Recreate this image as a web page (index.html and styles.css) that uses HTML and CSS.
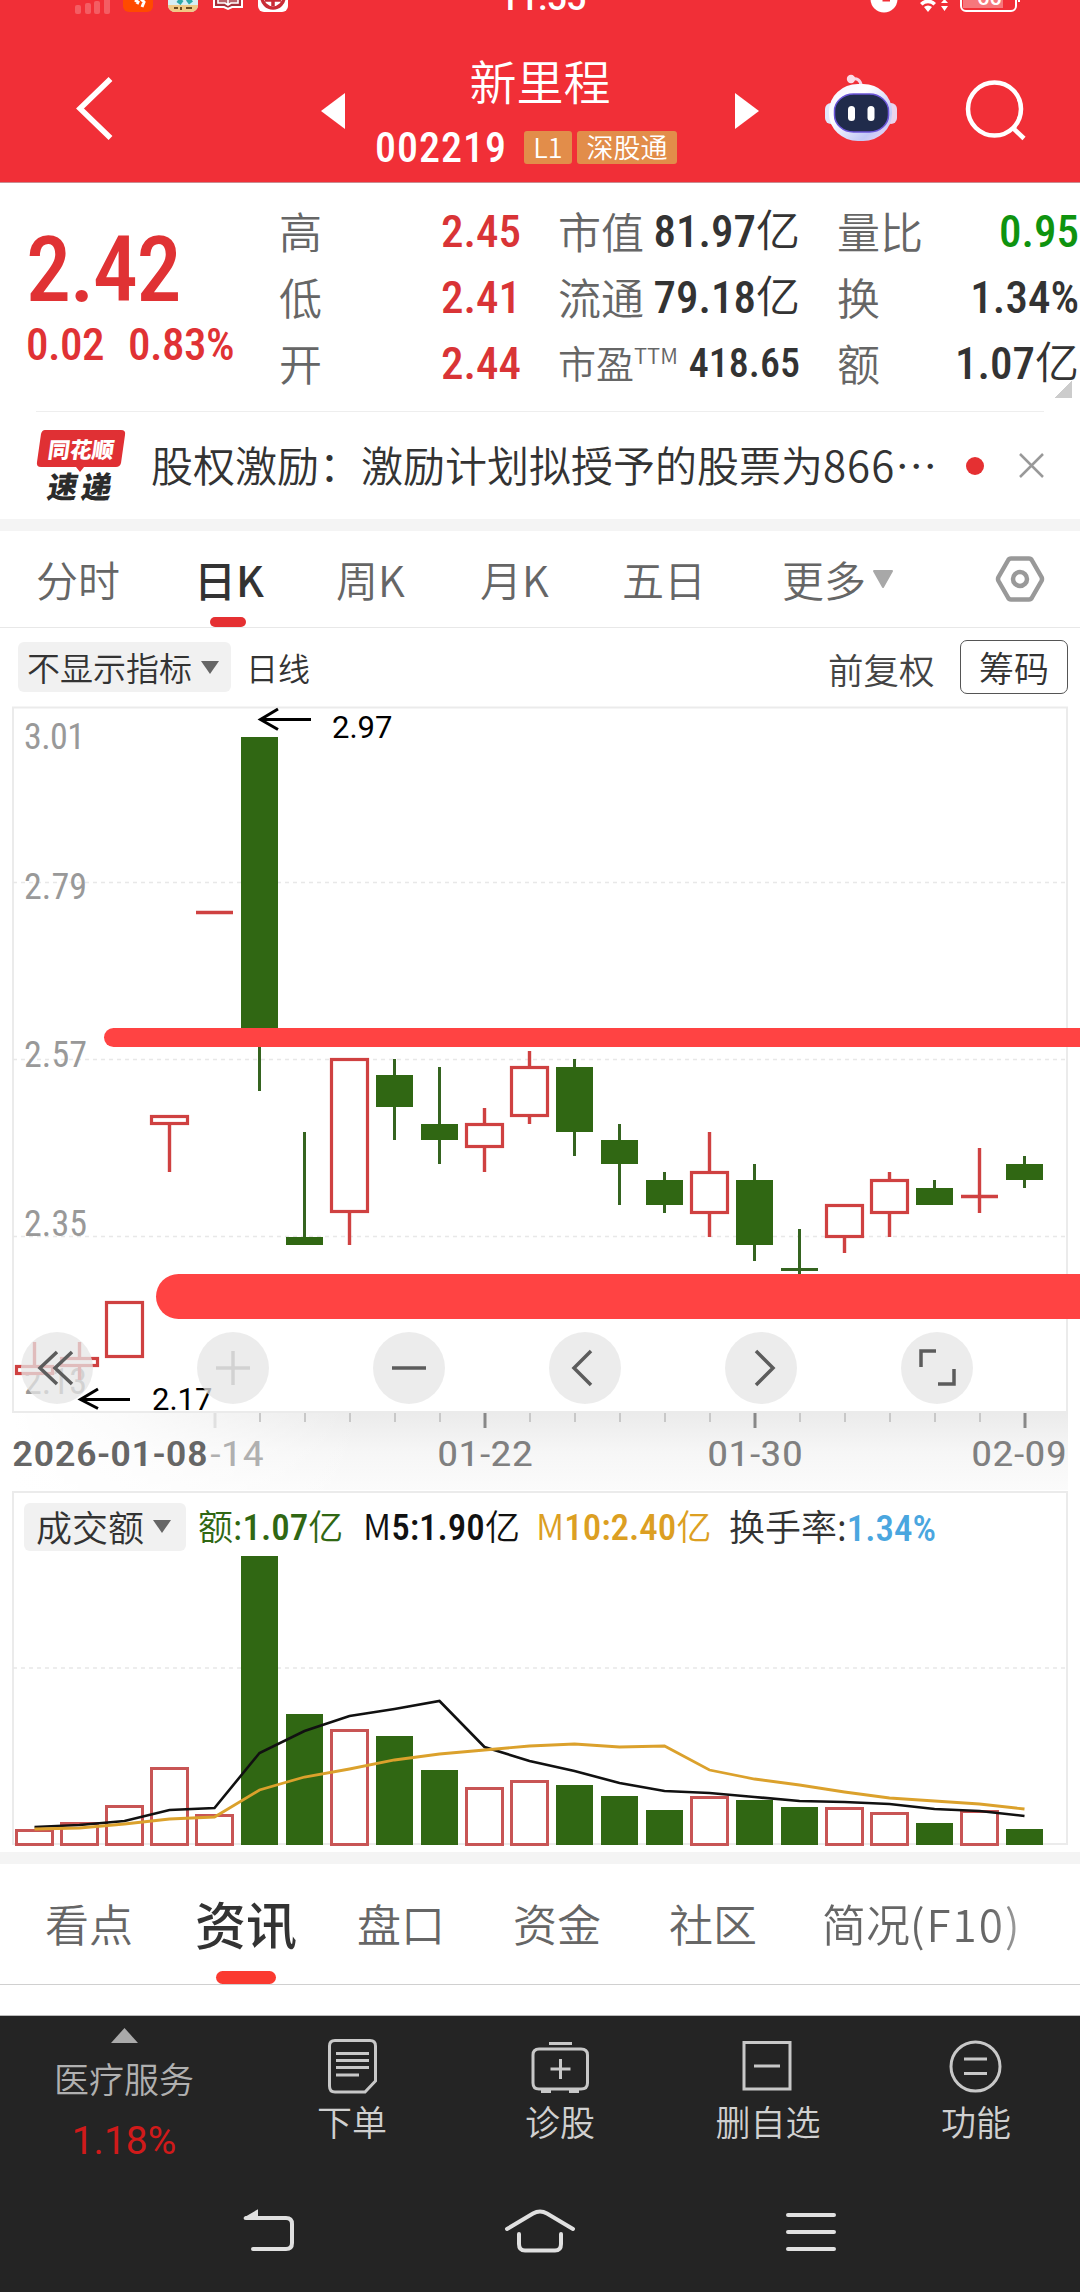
FILE: index.html
```html
<!DOCTYPE html>
<html lang="zh-CN">
<head>
	<meta charset="utf-8">
	<title>新里程 002219</title>
	<link rel="stylesheet" href="styles.css">
</head>
<body onload="drawCharts()">
	<div class="header">
		<div class="status">
			<svg class="status-left" width="230" height="14" viewBox="70 0 230 14">
				<g fill="#fff" opacity=".22">
					<rect x="75" y="5" width="6" height="9" rx="2"/>
					<rect x="85" y="3" width="6" height="11" rx="2"/>
					<rect x="94" y="1" width="6" height="13" rx="2"/>
					<rect x="104" y="-3" width="6" height="17" rx="2"/>
				</g>
				<rect x="123" y="-18" width="30" height="30" rx="6" fill="#ff4a00"/>
				<path d="M135 0l3 2-1 2M141 -1l3 3-2 5" fill="none" stroke="#fff" stroke-width="3"/>
				<rect x="168" y="-18" width="30" height="30" rx="7" fill="#d8eef4"/>
				<path d="M168 5h30a7 7 0 0 1-7 7h-16a7 7 0 0 1-7-7z" fill="#f0c985"/>
				<path d="M178 0l4 3M188 -1l3 4" stroke="#2fa8a8" stroke-width="5"/>
				<path d="M174 8h4M181 7v3M186 8h6" stroke="#6b4a20" stroke-width="2"/>
				<path d="M214 -4v11h10l4 2 4-2h10v-11" fill="#a3303a" stroke="#fff" stroke-width="2"/>
				<path d="M218 -4v7h7l3 2 3-2h7v-7M228 -4v9" fill="#fff" fill-opacity=".25" stroke="#fff" stroke-width="1.6"/>
				<rect x="258" y="-18" width="30" height="30" rx="6" fill="#fff"/>
				<circle cx="273" cy="-3" r="11" fill="none" stroke="#c92c36" stroke-width="3.500"/>
				<path d="M265 0h16M273 -3v9" stroke="#c92c36" stroke-width="3.500"/>
			</svg>
			<span class="clock">11:55</span>
			<svg class="status-right" width="160" height="14" viewBox="865 0 160 14">
				<circle cx="884" cy="-1" r="13.500" fill="#fff"/>
				<path d="M884 -6v6h6" fill="none" stroke="#f12f37" stroke-width="3"/>
				<path d="M924 7a6 6 0 0 1 8 0l-4 5zM920 3a11 11 0 0 1 16 0l-2.500 2.500a8 8 0 0 0-11 0z" fill="#fff"/>
				<path d="M941 3l3.500-4 3.500 4zM941 6l3.500 5 3.500-5z" fill="#fff"/>
				<rect x="961" y="-12" width="55" height="23" rx="5" fill="none" stroke="#fff" stroke-width="2"/>
				<rect x="963" y="-10" width="40" height="18" fill="#fff" opacity=".35"/>
				<text x="977" y="5" class="battery">60</text>
				<path d="M1019 -4v6" stroke="#fff" stroke-width="2"/>
			</svg>
		</div>
		<div class="title-bar">
			<svg class="back" width="40" height="68" viewBox="75 74 40 68"><path d="M110.500 79L80 108.500L110.500 138" fill="none" stroke="#fff" stroke-width="5.500"/></svg>
			<svg class="prev" width="24" height="36" viewBox="0 0 24 36"><path d="M0 18L24 0V36z" fill="#fff"/></svg>
			<div class="stock">
				<div class="stock-name">新里程</div>
				<div class="stock-code"><span class="num">002219</span><span class="badge l1">L1</span><span class="badge">深股通</span></div>
			</div>
			<svg class="next" width="24" height="36" viewBox="0 0 24 36"><path d="M24 18L0 0V36z" fill="#fff"/></svg>
			<svg class="robot" width="74" height="70" viewBox="824 73 74 70">
				<defs>
					<linearGradient id="shell" x1="0" y1="0" x2="1" y2="1"><stop offset="0" stop-color="#f4f2ff"/><stop offset=".35" stop-color="#ffffff"/><stop offset=".75" stop-color="#c3c8f7"/><stop offset="1" stop-color="#f8dcf0"/></linearGradient>
				</defs>
				<path d="M851 79.500q9-3 10.500 7" fill="none" stroke="#f7d5e6" stroke-width="3"/>
				<circle cx="851" cy="79" r="4.200" fill="#fbdbe6"/>
				<rect x="825" y="103" width="12" height="21" rx="6" fill="#e3e7fb"/>
				<rect x="885" y="103" width="12" height="21" rx="6" fill="#ead3ec"/>
				<rect x="829" y="84" width="63" height="57" rx="29" ry="27" fill="url(#shell)"/>
				<rect x="834.500" y="94" width="54" height="38" rx="19" ry="17" fill="#202b4b" stroke="#6b55d8" stroke-width="1.500"/>
				<rect x="848" y="106" width="7" height="15" rx="3.500" fill="#fff"/>
				<rect x="867.500" y="106" width="7" height="15" rx="3.500" fill="#fff"/>
			</svg>
			<svg class="search" width="66" height="66" viewBox="962 76 66 66"><g fill="none" stroke="#fff" stroke-width="4.500"><circle cx="994.500" cy="109" r="26.500"/><path d="M1013 128L1024 138.500"/></g></svg>
		</div>
	</div>

	<div class="quote">
		<div class="price">
			<div class="last num">2.42</div>
			<div class="change num"><span>0.02</span><span>0.83%</span></div>
		</div>
		<div class="col">
			<div class="cell"><span>高</span><b class="num up">2.45</b></div>
			<div class="cell"><span>低</span><b class="num up">2.41</b></div>
			<div class="cell"><span>开</span><b class="num up">2.44</b></div>
		</div>
		<div class="col">
			<div class="cell"><span>市值</span><b class="num">81.97<i>亿</i></b></div>
			<div class="cell"><span>流通</span><b class="num">79.18<i>亿</i></b></div>
			<div class="cell pe"><span>市盈<sup>TTM</sup></span><b class="num">418.65</b></div>
		</div>
		<div class="col">
			<div class="cell"><span>量比</span><b class="num down">0.95</b></div>
			<div class="cell"><span>换</span><b class="num">1.34%</b></div>
			<div class="cell"><span>额</span><b class="num">1.07<i>亿</i></b></div>
		</div>
		<div class="corner"></div>
	</div>

	<div class="news">
		<svg width="90" height="76" viewBox="36 427 90 76">
			<path d="M45 429H121Q126 429 125 434L121 462Q120 466 116 466H84L80 471L76 466H41Q36 466 37 461L41 433Q42 429 45 429z" fill="#e03034"/>
			<text class="logo-top" transform="translate(47 457) skewX(-8)">同花顺</text>
			<text class="logo-bottom" transform="translate(46 497) skewX(-10)" textLength="64">速递</text>
		</svg>
		<div class="news-text">股权激励：激励计划拟授予的股票为<span>866</span>⋯</div>
		<div class="news-dot"></div>
		<svg width="25" height="25" viewBox="0 0 25 25"><path d="M1 1L24 24M24 1L1 24" stroke="#999" stroke-width="2.500"/></svg>
	</div>
	<div class="band"></div>

	<div class="tabs">
		<div>分时</div>
		<div class="active">日K</div>
		<div>周K</div>
		<div>月K</div>
		<div>五日</div>
		<div>更多<svg width="22" height="19" viewBox="0 0 22 19"><path d="M2 1H20L11 17z" fill="#a8a8a8" stroke="#a8a8a8" stroke-width="2" stroke-linejoin="round"/></svg></div>
		<div><svg class="gear" width="50" height="48" viewBox="0 0 50 48"><g fill="none" stroke="#999" stroke-width="4.500" stroke-linejoin="round"><path d="M16 3.500H34Q36 3.500 37 5.500L46.500 22Q47.500 24 46.500 26L37 42.500Q36 44.500 34 44.500H16Q14 44.500 13 42.500L3.500 26Q2.500 24 3.500 22L13 5.500Q14 3.500 16 3.500z"/><circle cx="25" cy="24" r="7"/></g></svg></div>
	</div>

	<div class="tools">
		<div class="select">不显示指标<svg width="18" height="13" viewBox="0 0 18 13"><path d="M0 0H18L9 13z" fill="#666"/></svg></div>
		<div class="period">日线</div>
		<div class="adjust">前复权</div>
		<div class="chips">筹码</div>
	</div>

	<div class="kline">
		<svg id="kline" width="1080" height="790" viewBox="0 700 1080 790">
			<defs>
				<linearGradient id="shade" x1="0" y1="0" x2="0" y2="1"><stop offset="0" stop-color="#ebebeb"/><stop offset=".5" stop-color="#f6f6f6"/><stop offset="1" stop-color="#fbfbfb"/></linearGradient>
				<linearGradient id="fade" x1="0" y1="0" x2="1" y2="0"><stop offset="0" stop-color="#fff"/><stop offset=".3" stop-color="#fff" stop-opacity=".8"/><stop offset="1" stop-color="#fff" stop-opacity="0"/></linearGradient>
			</defs>
			<rect x="13" y="1413" width="1055" height="77" fill="url(#shade)"/>
			<rect x="12" y="1413" width="350" height="77" fill="url(#fade)"/>
			<path d="M13 707.500H1067V1412H13z" fill="#fff" stroke="#ebebeb" stroke-width="2"/>
			<path class="grid" d="M13 882.500H1067M13 1059.500H1067M13 1236.500H1067"/>
			<g class="axis">
				<text x="24" y="749" textLength="61">3.01</text>
				<text x="24" y="899" textLength="63">2.79</text>
				<text x="24" y="1067" textLength="63">2.57</text>
				<text x="24" y="1236" textLength="63">2.35</text>
				<text x="24" y="1394" textLength="63">2.13</text>
			</g>
			<g id="candles"></g>
			<g id="ticks"></g>
			<g class="mark">
				<path d="M311 719.500H261M278 709L260.500 719.500L278 729.500"/>
				<path d="M130 1399.500H81M98 1389L80.500 1399.500L98 1408.500"/>
				<text x="332" y="738">2.97</text>
				<text x="152" y="1410">2.17</text>
			</g>
			<path d="M113.500 1037.500H1090" stroke="#ff4343" stroke-width="19" stroke-linecap="round"/>
			<path d="M178.500 1296.500H1110" stroke="#ff4343" stroke-width="45" stroke-linecap="round"/>
			<g class="dates">
				<text x="12" y="1466" textLength="196" lengthAdjust="spacingAndGlyphs" class="first">2026-01-08</text>
				<text x="210" y="1466" textLength="54" lengthAdjust="spacingAndGlyphs" class="faded">-14</text>
				<text x="437" y="1466" textLength="96" lengthAdjust="spacingAndGlyphs">01-22</text>
				<text x="707" y="1466" textLength="96" lengthAdjust="spacingAndGlyphs">01-30</text>
				<text x="971" y="1466" textLength="96" lengthAdjust="spacingAndGlyphs">02-09</text>
			</g>
		</svg>
		<div class="controls">
			<button><svg viewBox="0 0 72 72"><path d="M36 20L19 36L36 52M51 20L34 36L51 52"/></svg></button>
			<button class="disabled"><svg viewBox="0 0 72 72"><path d="M19 36H53M36 19V53"/></svg></button>
			<button><svg viewBox="0 0 72 72"><path d="M19 36H53"/></svg></button>
			<button><svg viewBox="0 0 72 72"><path d="M42 19L25 36L42 53"/></svg></button>
			<button><svg viewBox="0 0 72 72"><path d="M31 19L48 36L31 53"/></svg></button>
			<button><svg viewBox="0 0 72 72"><path d="M20 35V19H35M53 37V52H37"/></svg></button>
		</div>
	</div>

	<div class="volume">
		<svg id="volume" width="1080" height="362" viewBox="0 1490 1080 362">
			<path d="M13 1492H1067V1844H13z" fill="none" stroke="#ebebeb" stroke-width="2"/>
			<path class="grid" d="M13 1668H1067"/>
			<g id="bars"></g>
			<polyline id="m5" fill="none" stroke="#111" stroke-width="2.600"/>
			<polyline id="m10" fill="none" stroke="#dba12c" stroke-width="2.800"/>
		</svg>
		<div class="legend">
			<div class="select">成交额<svg width="18" height="13" viewBox="0 0 18 13"><path d="M0 0H18L9 13z" fill="#666"/></svg></div>
			<div class="amount">额:<b class="num">1.07</b>亿</div>
			<div class="ma5">M<b class="num">5:1.90</b>亿</div>
			<div class="ma10">M<b class="num">10:2.40</b>亿</div>
			<div class="turnover">换手率:<b class="num">1.34%</b></div>
		</div>
	</div>
	<div class="band"></div>

	<div class="pages">
		<div>看点</div>
		<div class="active">资讯</div>
		<div>盘口</div>
		<div>资金</div>
		<div>社区</div>
		<div class="last-page">简况<span>(F10)</span></div>
	</div>

	<div class="bottom">
		<div class="sector">
			<svg width="27" height="15" viewBox="0 0 27 15"><path d="M13.500 0L27 15H0z" fill="#aaa"/></svg>
			<div>医疗服务</div>
			<div class="sector-rate">1.18%</div>
		</div>
		<div class="action">
			<svg width="60" height="60" viewBox="322 2036 60 60"><path d="M335 2040.500H370Q375.500 2040.500 375.500 2046V2081L365 2092H335Q329.500 2092 329.500 2086V2046Q329.500 2040.500 335 2040.500zM336 2053.500H369M336 2060.500H369M336 2067.500H369M336 2075H359"/></svg>
			<div>下单</div>
		</div>
		<div class="action">
			<svg width="60" height="60" viewBox="529 2036 60 60"><path d="M538 2049H580Q586.500 2049 586.500 2055V2083Q586.500 2089 580 2089H538Q532 2089 532 2083V2055Q532 2049 538 2049zM548 2043.500H571M549.500 2069H569.500M559.500 2059V2079M540 2091.500H550M568 2091.500H578"/></svg>
			<div>诊股</div>
		</div>
		<div class="action">
			<svg width="60" height="60" viewBox="738 2036 60 60"><path d="M744 2042.500H790V2089H744zM754 2066H780"/></svg>
			<div>删自选</div>
		</div>
		<div class="action">
			<svg width="60" height="60" viewBox="946 2036 60 60"><circle cx="975.500" cy="2066.500" r="24.500"/><path d="M964 2059H987M964 2073.500H987"/></svg>
			<div>功能</div>
		</div>
	</div>
	<div class="nav">
		<svg width="80" height="50" viewBox="229 2206 80 50"><path d="M246 2218H286Q292 2218 292 2224V2243Q292 2249 286 2249H253"/><path d="M244 2218.500L257 2211V2218z" class="tip"/></svg>
		<svg width="80" height="50" viewBox="501 2206 80 50"><path d="M508 2229L534 2213.500Q541 2209.500 548 2213.500L574 2229M520 2234V2244Q520 2250.500 526 2250.500H556Q562 2250.500 562 2244V2234"/></svg>
		<svg width="80" height="50" viewBox="771 2206 80 50"><path d="M788 2215H834M788 2232H834M788 2249H834"/></svg>
	</div>

	<script type="text/javascript">
		var step = 45;
		var firstX = 34.5;
		var baseLine = 1845;

		// [up, wick top, body top, body bottom, wick bottom, volume top]
		var days = [
			[1, 1342, 1365, 1375, 1375, 1829],
			[1, 1342, 1357, 1367, 1380, 1822],
			[1, 1301, 1301, 1358, 1358, 1805],
			[1, 1115, 1115, 1125, 1172, 1767],
			[1, 912, 912, 912, 912, 1814],
			[0, 737, 737, 1030, 1091, 1556],
			[0, 1132, 1237, 1245, 1245, 1714],
			[1, 1058, 1058, 1213, 1245, 1729],
			[0, 1059, 1075, 1107, 1140, 1736],
			[0, 1067, 1124, 1140, 1164, 1770],
			[1, 1108, 1123, 1148, 1172, 1787],
			[1, 1051, 1066, 1117, 1124, 1780],
			[0, 1059, 1067, 1132, 1156, 1785],
			[0, 1124, 1140, 1164, 1205, 1796],
			[0, 1172, 1180, 1205, 1213, 1810],
			[1, 1132, 1171, 1214, 1237, 1796],
			[0, 1164, 1180, 1245, 1261, 1800],
			[0, 1229, 1269, 1269, 1280, 1807],
			[1, 1204, 1204, 1238, 1253, 1807],
			[1, 1172, 1179, 1214, 1237, 1812],
			[0, 1180, 1188, 1205, 1205, 1823],
			[1, 1148, 1196, 1196, 1213, 1810],
			[0, 1156, 1164, 1180, 1188, 1829]
		];
		var m5 = [1827, 1825, 1821, 1810, 1808, 1753, 1731, 1716, 1709, 1701, 1747, 1761, 1771, 1783, 1791, 1793, 1797, 1801, 1802, 1804, 1809, 1811, 1816];
		var m10 = [1829, 1828, 1824, 1819, 1817, 1790, 1777, 1769, 1760, 1754, 1750, 1746, 1744, 1747, 1746, 1770, 1779, 1785, 1792, 1798, 1801, 1804, 1809];

		function vline(x, y1, y2, name)
		{
			if(y2 <= y1) return '';
			return '<path class="' + name + '" d="M' + x + ' ' + y1 + 'V' + y2 + '"/>';
		}

		function box(x, y1, y2, up)
		{
			if(up) {
				return '<rect class="hollow" x="' + (x - 18) + '" y="' + (y1 + 1.5) + '" width="36" height="' + (y2 - y1 - 3) + '"/>';
			}
			return '<rect class="solid" x="' + (x - 18.5) + '" y="' + y1 + '" width="37" height="' + (y2 - y1) + '"/>';
		}

		function points(list)
		{
			return list.map(function(y, i) { return (firstX + i * step) + ',' + y; }).join(' ');
		}

		function drawCharts()
		{
			var candles = '', bars = '', ticks = '';
			for(var i = 0; i < days.length; i++)
			{
				var d = days[i];
				var x = firstX + i * step;
				var wick = d[0] ? 'wick-up' : 'wick-down';
				candles += vline(x, d[1], d[2], wick) + vline(x, d[3], d[4], wick);
				if(d[2] == d[3]) {
					candles += '<path class="' + wick + '" d="M' + (x - 18.5) + ' ' + (d[2] + 0.5) + 'h37"/>';
				} else {
					candles += box(x, d[2], d[3], d[0]);
				}
				bars += box(x, d[5], d[0] ? baseLine + 1 : baseLine, d[0]);
				if(i == 4) {
					ticks += vline(x + 0.5, 1413, 1428, 'tick-pale');
				} else if(i > 4) {
					var major = (i - 4) % 6 == 0;
					ticks += vline(x + 0.5, 1413, major ? 1428 : 1422, major ? 'tick-major' : 'tick');
				}
			}
			document.getElementById('candles').innerHTML = candles;
			document.getElementById('bars').innerHTML = bars;
			document.getElementById('ticks').innerHTML = ticks;
			document.getElementById('m5').setAttribute('points', points(m5));
			document.getElementById('m10').setAttribute('points', points(m10));
		}
	</script>
</body>
</html>
```
FILE: styles.css
```css
body {
	margin: 0;
	width: 1080px;
	background-color: #fff;
	font-family: "Noto Sans CJK SC", sans-serif;
	font-weight: 350;
	color: #333;
}
svg {
	display: block;
	flex: none;
}
.num {
	font-family: Roboto, "Noto Sans CJK SC", sans-serif;
	font-stretch: 75%;
	font-weight: 500;
}
.num i {
	font-family: "Noto Sans CJK SC", sans-serif;
	font-style: normal;
	font-weight: 350;
	font-size: 44px;
	line-height: 1px;
}

/* red header */
.header {
	height: 182px;
	background-color: #f12f37;
	border-bottom: 1px solid #c98d92;
	color: #fff;
}
.status {
	display: flex;
	height: 14px;
	overflow: hidden;
	padding-left: 70px;
}
.clock {
	width: 90px;
	margin-left: 199px;
	margin-top: -23px;
	font: 500 36px/42px Roboto, sans-serif;
	letter-spacing: -1px;
}
.status-right {
	margin-left: 276px;
}
.battery {
	font: 500 22px Roboto, sans-serif;
	fill: #fff;
}
.title-bar {
	display: flex;
	align-items: flex-start;
	height: 168px;
}
.back { margin: 60px 0 0 75px; }
.prev { margin: 79px 0 0 206px; }
.stock {
	width: 390px;
	text-align: center;
}
.stock-name {
	margin-top: 34px;
	height: 65px;
	line-height: 64px;
	font-size: 47px;
}
.stock-code {
	display: flex;
	align-items: center;
	padding: 17px 0 0 30px;
	height: 34px;
	font-size: 42px;
	letter-spacing: 1px;
}
.badge {
	height: 33px;
	width: 100px;
	margin-left: 5px;
	border-radius: 3px;
	background-color: #e28d4a;
	font-size: 27px;
	line-height: 31px;
	letter-spacing: 0;
}
.badge.l1 {
	width: 48px;
	margin-left: 17px;
}
.next { margin: 79px 0 0; }
.robot { margin: 59px 0 0 65px; }
.search { margin: 62px 0 0 64px; }

/* quote */
.quote {
	position: relative;
	display: flex;
	height: 212px;
	padding-top: 16px;
}
.price {
	flex: none;
	width: 253px;
	padding-left: 26px;
	color: #e03234;
}
.last {
	height: 100px;
	padding-top: 20px;
	font-size: 90px;
	line-height: 104px;
	letter-spacing: -1.5px;
}
.change {
	margin-top: -1px;
	font-size: 45px;
	line-height: 54px;
	letter-spacing: -0.5px;
}
.change span { margin-right: 24px; }
.col {
	flex: none;
	width: 242px;
	margin-right: 37px;
}
.cell {
	display: flex;
	justify-content: space-between;
	align-items: center;
	height: 66px;
	font-size: 43px;
	line-height: 60px;
	color: #666;
	white-space: nowrap;
}
.cell span {
	margin-top: -5px;
}
.cell b {
	font-size: 45px;
	color: #333;
}
.cell .up { color: #d93436; }
.cell .down { color: #0f930f; }
.pe { font-size: 38px; }
.pe b { font-size: 40px; }
.pe sup {
	font-size: 22px;
	line-height: 0;
	vertical-align: 14px;
}
.corner {
	position: absolute;
	left: 1054px;
	top: 197px;
	width: 18px;
	height: 18px;
	background: linear-gradient(135deg, transparent 50%, #ccc 50%);
}

/* news line */
.news {
	display: flex;
	align-items: center;
	height: 107px;
	margin: 0 36px;
	border-top: 1px solid #eee;
}
.logo-top {
	font-size: 22px;
	font-weight: 900;
	fill: #fff;
}
.logo-bottom {
	font-size: 30px;
	font-weight: 900;
	fill: #2b2b2b;
}
.news-text {
	width: 789px;
	margin: -4px 0 0 25px;
	font-size: 42px;
	line-height: 60px;
	white-space: nowrap;
	overflow: hidden;
}
.news-text span { letter-spacing: 1px; }
.news-dot {
	width: 18px;
	height: 18px;
	margin: 0 35px 0 26px;
	border-radius: 50%;
	background-color: #e53032;
}
.band {
	height: 12px;
	background-color: #f4f4f4;
}

/* period tabs */
.tabs {
	display: grid;
	grid-template-columns: 158px 142px 144px 142px 160px 212px 60px;
	height: 96px;
	padding-left: 36px;
	line-height: 94px;
	font-size: 42px;
	color: #666;
	border-bottom: 1px solid #e8e8e8;
}
.tabs div {
	position: relative;
	display: flex;
	align-items: center;
}
.tabs svg { margin-left: 6px; }
.tabs .gear { margin: 0 0 0 1px; }
.active {
	font-weight: 500;
	color: #333;
}
.tabs .active::after {
	content: "";
	position: absolute;
	left: 16px;
	bottom: 0;
	width: 36px;
	height: 10px;
	border-radius: 5px;
	background-color: #e53032;
}

.tools {
	display: flex;
	align-items: flex-start;
	height: 72px;
	padding-left: 18px;
}
.select {
	display: flex;
	align-items: center;
	box-sizing: border-box;
	width: 213px;
	height: 50px;
	margin-top: 14px;
	padding-left: 9px;
	border-radius: 6px;
	background-color: #f1f1f1;
	font-size: 33px;
	line-height: 48px;
}
.select svg { margin-left: 9px; }
.period {
	width: 582px;
	margin: 13px 0 0 15px;
	font-size: 32px;
	line-height: 52px;
}
.adjust {
	width: 132px;
	margin-top: 16px;
	font-size: 35.5px;
	line-height: 50px;
	color: #444;
}
.chips {
	width: 106px;
	height: 52px;
	margin-top: 12px;
	border: 1px solid #555;
	border-radius: 7px;
	text-align: center;
	font-size: 35px;
	line-height: 51px;
}

/* k line chart */
.kline {
	position: relative;
	height: 790px;
}
.grid {
	stroke: #e8e8e8;
	stroke-width: 1.5;
	stroke-dasharray: 4 4;
}
.axis {
	font: 450 36px Roboto, sans-serif;
	font-stretch: 75%;
	fill: #999;
}
.mark {
	font: 400 31px Roboto, sans-serif;
	fill: #000;
}
.mark path {
	fill: none;
	stroke: #000;
	stroke-width: 3;
}
.dates {
	font: 400 35px Roboto, sans-serif;
	font-stretch: 75%;
	fill: #808080;
}
.dates .first {
	font-weight: 500;
	fill: #666;
}
.dates .faded { fill: #b0b0b0; }
.wick-up { stroke: #cf4141; stroke-width: 3.4; }
.wick-down { stroke: #356420; stroke-width: 3; }
.hollow { fill: #fff; stroke: #cf4141; stroke-width: 3.2; }
#bars .hollow { fill: none; stroke: #c85555; stroke-width: 3; }
.solid { fill: #306713; }
.tick { stroke: #c8c8c8; stroke-width: 2; }
.tick-major { stroke: #888; stroke-width: 3; }
.tick-pale { stroke: #e0e0e0; stroke-width: 3; }

.controls {
	position: absolute;
	left: 21px;
	top: 632px;
	display: flex;
	gap: 104px;
}
.controls button {
	width: 72px;
	height: 72px;
	padding: 0;
	border: 0;
	border-radius: 50%;
	background-color: rgba(230, 230, 230, 0.75);
}
.controls path {
	fill: none;
	stroke: #5c5c5c;
	stroke-width: 3.5;
}
.controls .disabled path { stroke: #d2d2d2; }

/* volume chart */
.volume {
	position: relative;
	height: 362px;
}
.volume > svg {
	position: absolute;
	left: 0;
	top: 0;
}
.legend {
	position: relative;
	display: flex;
	align-items: flex-start;
	padding: 13px 0 0 24px;
	font-size: 35px;
	line-height: 44px;
	white-space: nowrap;
}
.legend b { font-size: 37px; line-height: 1px; }
.legend .select {
	width: 162px;
	height: 48px;
	margin: 0;
	padding: 0 0 2px 12px;
	font-size: 36px;
}
.amount {
	width: 165px;
	margin-left: 12px;
	color: #306713;
}
.ma5 {
	width: 173px;
	color: #111;
}
.ma10 {
	width: 193px;
	color: #dc9f22;
}
.legend .turnover { font-size: 36px; }
.turnover b { color: #4aa6df; }

/* content tabs */
.pages {
	display: grid;
	grid-template-columns: 150px 162px 156px 156px 153px 210px;
	height: 120px;
	padding-left: 45px;
	border-bottom: 1px solid #d0d0d0;
	font-size: 44px;
	line-height: 119px;
	color: #666;
}
.pages .active {
	position: relative;
	font-size: 51px;
}
.pages .active::after {
	content: "";
	position: absolute;
	left: 21px;
	bottom: 0;
	width: 60px;
	height: 13px;
	border-radius: 7px;
	background-color: #fb3a30;
}
.last-page {
	background: linear-gradient(to right, #666 80%, #aaa 96%);
	-webkit-background-clip: text;
	background-clip: text;
	color: transparent;
	white-space: nowrap;
}
.last-page span { letter-spacing: 2px; }

/* bottom bars */
.bottom {
	display: grid;
	grid-template-columns: 248px 208px 208px 208px 208px;
	height: 154px;
	margin-top: 30px;
	border-top: 1px solid #bbb;
	background-color: #242424;
	color: #d0d0d0;
	font-size: 35px;
	line-height: 50px;
	text-align: center;
}
.sector {
	padding-top: 12px;
	color: #b0b0b0;
}
.sector svg { margin: 0 auto 10px; }
.sector-rate {
	margin-top: 11px;
	font: 400 39px/54px Roboto, sans-serif;
	color: #d01a1a;
}
.action svg {
	margin: 20px auto 0;
	fill: none;
	stroke: #c8c8c8;
	stroke-width: 3;
}
.nav {
	display: flex;
	height: 86px;
	padding: 36px 0 0 229px;
	gap: 191px;
	background-color: #242424;
}
.nav path {
	fill: none;
	stroke: #e0e0e0;
	stroke-width: 4;
	stroke-linecap: round;
}
.nav .tip {
	fill: #e0e0e0;
	stroke-width: 2;
}
```
